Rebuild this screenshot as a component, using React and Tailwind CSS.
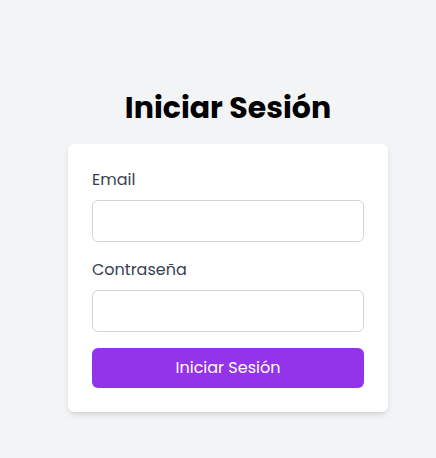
export default function App() {
  return (
    <div className="min-h-screen bg-[#f3f4f6] pl-5 pt-[90px] flex justify-center" style={{ fontFamily: "Poppins, Inter, 'Noto Sans', sans-serif" }}>
      <div className="w-80">
        <h1 className="text-[30px] leading-9 font-bold text-black text-center mb-[18px]">Iniciar Sesión</h1>
        <div className="bg-white rounded-md shadow-md px-6 pt-6 pb-6">
          <label className="block text-base leading-6 text-[#374151] mb-2">Email</label>
          <input type="email" className="block w-full h-[42px] border border-[#d1d5db] rounded-md px-3 mb-4 outline-none" />
          <label className="block text-base leading-6 text-[#374151] mb-2">Contraseña</label>
          <input type="password" className="block w-full h-[42px] border border-[#d1d5db] rounded-md px-3 mb-4 outline-none" />
          <button className="w-full h-10 bg-[#9333ea] text-white text-base rounded-md">Iniciar Sesión</button>
        </div>
      </div>
    </div>
  );
}
